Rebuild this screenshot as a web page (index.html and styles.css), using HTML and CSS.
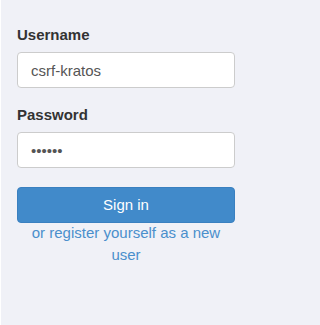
FILE: index.html
```html
<!DOCTYPE html>
<html>
<head>
<meta charset="utf-8">
<link rel="stylesheet" href="styles.css">
</head>
<body>
<div class="page">
  <form class="login">
    <div class="form-group">
      <label class="label" for="u">Username</label>
      <input class="input" id="u" type="text" value="csrf-kratos">
    </div>
    <div class="form-group last">
      <label class="label" for="p">Password</label>
      <input class="input" id="p" type="password" value="123456">
    </div>
    <button class="btn" type="button">Sign in</button>
    <a class="register" href="#">or register yourself as a new user</a>
  </form>
</div>
</body>
</html>
```
FILE: styles.css
```css
html, body {
  margin: 0;
  padding: 0;
  height: 100%;
}
body {
  background: #f0f1f7;
  font-family: "Liberation Sans", Arial, sans-serif;
  font-size: 15px;
  color: #333;
}
.page {
  box-sizing: border-box;
  min-height: 100%;
  border-left: 1px solid #ffffff;
  padding: 24px 0 0 16px;
}
.login {
  width: 218px;
  display: flex;
  flex-direction: column;
}
.form-group {
  display: flex;
  flex-direction: column;
  margin-bottom: 16px;
}
.form-group.last {
  margin-bottom: 19px;
}
.label {
  font-weight: bold;
  line-height: 21px;
  margin-bottom: 7px;
  color: #333;
}
.input {
  box-sizing: border-box;
  height: 36px;
  width: 100%;
  padding: 0 13px;
  border: 1px solid #cccccc;
  border-radius: 4px;
  background: #ffffff;
  font-family: "Liberation Sans", Arial, sans-serif;
  font-size: 15px;
  color: #555;
  outline: none;
}
.btn {
  box-sizing: border-box;
  height: 36px;
  width: 100%;
  border: 1px solid #3a80c0;
  border-radius: 4px;
  background: #418aca;
  color: #ffffff;
  font-family: "Liberation Sans", Arial, sans-serif;
  font-size: 15px;
  padding: 0 0 1px 0;
}
.register {
  display: block;
  margin-top: -1px;
  text-align: center;
  line-height: 22px;
  color: #4a8fcc;
  text-decoration: none;
  padding: 0 10px;
}
```
